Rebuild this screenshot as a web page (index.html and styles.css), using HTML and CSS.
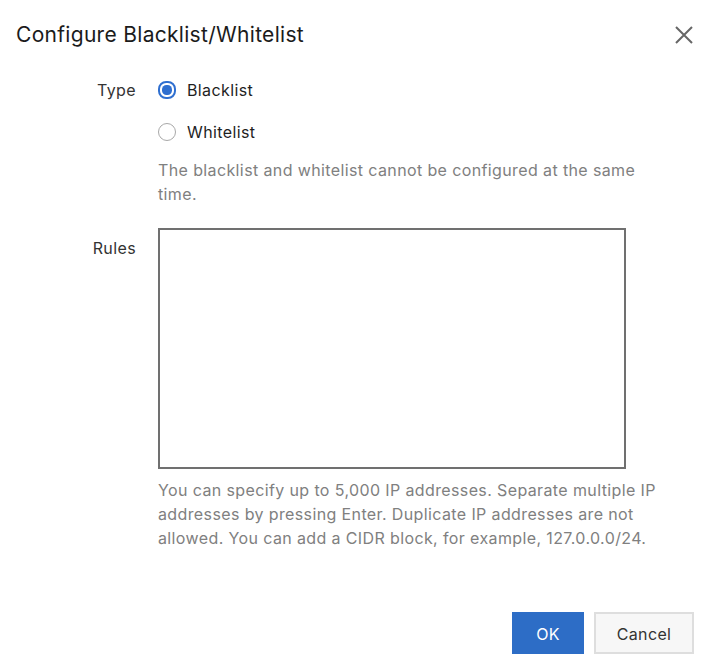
FILE: index.html
```html
<!DOCTYPE html>
<html lang="en">
<head>
<meta charset="utf-8">
<title>Configure Blacklist/Whitelist</title>
<link rel="stylesheet" href="styles.css">
</head>
<body>
<div class="dialog">
  <header class="dialog-header">
    <h1 class="dialog-title">Configure Blacklist/Whitelist</h1>
    <button class="close-btn" aria-label="Close">
      <svg width="20" height="20" viewBox="0 0 20 20"><path d="M2 2 L18 18 M18 2 L2 18" stroke="#666" stroke-width="2" fill="none"/></svg>
    </button>
  </header>
  <div class="dialog-body">
    <div class="form-row">
      <div class="form-label type-label">Type</div>
      <div class="form-control">
        <label class="radio-row"><span class="radio checked"></span><span class="radio-text">Blacklist</span></label>
        <label class="radio-row"><span class="radio"></span><span class="radio-text">Whitelist</span></label>
        <p class="help help-type">The blacklist and whitelist cannot be configured at the same time.</p>
      </div>
    </div>
    <div class="form-row rules-row">
      <div class="form-label rules-label">Rules</div>
      <div class="form-control">
        <div class="textarea"></div>
        <p class="help help-rules">You can specify up to 5,000 IP addresses. Separate multiple IP addresses by pressing Enter. Duplicate IP addresses are not allowed. You can add a CIDR block, for example, 127.0.0.0/24.</p>
      </div>
    </div>
  </div>
  <footer class="dialog-footer">
    <button class="btn btn-primary">OK</button>
    <button class="btn btn-default">Cancel</button>
  </footer>
</div>
</body>
</html>
```
FILE: styles.css
```css
* { box-sizing: border-box; }
html, body { margin: 0; padding: 0; background: #fff; }
body {
  font-family: "Inter", "Noto Sans", sans-serif;
  color: #1f1f1f;
  width: 716px;
  height: 670px;
  overflow: hidden;
  letter-spacing: 0.38px;
}
.dialog { display: flex; flex-direction: column; height: 670px; }
.dialog-header {
  height: 69px;
  display: flex;
  align-items: center;
  justify-content: space-between;
  padding: 0 22px 0 16px;
}
.dialog-title {
  margin: 0;
  font-size: 21px;
  font-weight: 400;
  color: #1b1b1b;
  letter-spacing: 0.3px;
}
.close-btn {
  border: 0;
  background: none;
  padding: 0;
  width: 20px;
  height: 20px;
  display: flex;
  cursor: pointer;
}
.form-row { display: flex; gap: 22px; }
.form-label {
  width: 136px;
  text-align: right;
  font-size: 16px;
  color: #333;
  line-height: 24px;
}
.type-label { padding-top: 9px; }
.rules-label { padding-top: 8px; }
.form-control { width: 510px; }
.radio-row {
  height: 42px;
  display: flex;
  align-items: center;
  gap: 11px;
  font-size: 16px;
  color: #1f1f1f;
}
.radio {
  width: 18px;
  height: 18px;
  border-radius: 50%;
  border: 1.5px solid #a8a8a8;
  background: #fff;
  display: inline-block;
  position: relative;
}
.radio.checked {
  border: 2px solid #2f6fd0;
  border-radius: 45%;
}
.radio.checked::after {
  content: "";
  position: absolute;
  left: 2px; top: 2px;
  width: 10px; height: 10px;
  border-radius: 45%;
  background: #2f6fd0;
}
.help {
  margin: 0;
  font-size: 16px;
  line-height: 24px;
  color: #808080;
}
.help-type { margin-top: 5px; }
.rules-row { margin-top: 22px; }
.textarea {
  width: 468px;
  height: 241px;
  border: 2px solid #707070;
  background: #fff;
}
.help-rules { margin-top: 9px; }
.dialog-footer {
  margin-top: auto;
  display: flex;
  justify-content: flex-end;
  gap: 10px;
  padding: 0 22px 16px 0;
}
.btn {
  height: 42px;
  font-family: inherit;
  font-size: 16px;
  letter-spacing: 0.38px;
  border-radius: 0;
  padding-top: 2px;
  cursor: pointer;
}
.btn-primary {
  width: 72px;
  background: #2d6dc6;
  color: #fff;
  border: 0;
}
.btn-default {
  width: 100px;
  background: #f7f7f7;
  color: #333;
  border: 2px solid #dedede;
}
```
